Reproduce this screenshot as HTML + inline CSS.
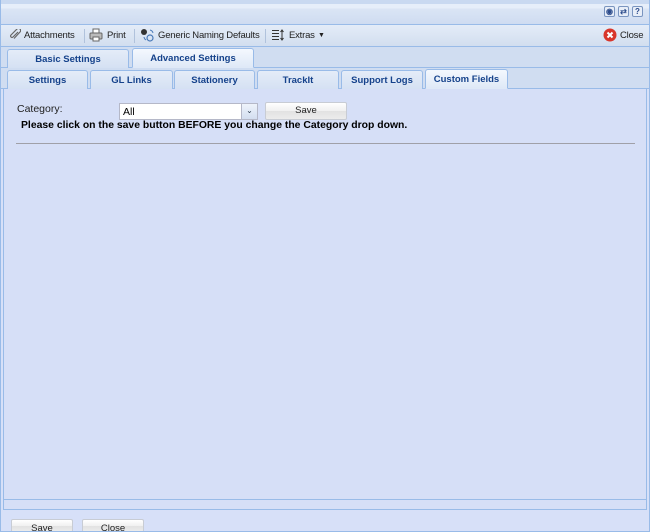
<!DOCTYPE html>
<html><head><meta charset="utf-8"><style>
*{box-sizing:border-box;margin:0;padding:0}
html,body{width:650px;height:532px;overflow:hidden}
body{background:#d7e0f8;font-family:"Liberation Sans",sans-serif;font-size:11px;position:relative;color:#000}
.abs{position:absolute}
#frame{left:0;top:0;width:650px;height:532px;border:1px solid #99bbe8;border-top:none}
#hdr{left:0;top:0;width:650px;height:25px;background:linear-gradient(#e6eefa 0,#e6eefa 4px,#dae5f5 5px,#cfdcf1);border:1px solid #99bbe8;border-top:4px solid #c9d9f1}
#tb{left:0;top:25px;width:650px;height:22px;background:linear-gradient(#e4ecf8,#d2deef);border:1px solid #99bbe8;border-top:none}
.ti{position:absolute;top:5px;font-size:9.5px;color:#222;letter-spacing:-0.2px}
.sep{position:absolute;top:4px;width:1px;height:14px;background:#b0c2dc}
#t1{left:0;top:47px;width:650px;height:21px;background:#d0ddf1;border-left:1px solid #99bbe8;border-right:1px solid #99bbe8;border-bottom:1px solid #99bbe8}
#t2{left:0;top:68px;width:650px;height:21px;background:#d0ddf1;border-left:1px solid #99bbe8;border-right:1px solid #99bbe8;border-bottom:1px solid #99bbe8}
.tab{position:absolute;bottom:-1px;height:19px;border:1px solid #99bbe8;border-bottom:none;border-radius:3px 3px 0 0;background:linear-gradient(#e4ecf8,#d5e1f3);font-weight:bold;font-size:9.5px;color:#15428b;text-align:center;line-height:19px}
.act{background:linear-gradient(#f4f8fe,#dfe9f7);height:20px;border-bottom:1px solid #dfe9f7}
#content{left:3px;top:89px;width:644px;height:411px;background:#d6dff7;border-left:1px solid #99bbe8;border-right:1px solid #99bbe8;border-bottom:1px solid #99bbe8}
.btn{position:absolute;height:22px;border:1px solid #c8ccd4;border-radius:2px;background:linear-gradient(#ffffff,#f0f0f0 50%,#e2e2e2 51%,#ececec);font-size:9.5px;text-align:center;line-height:18px;color:#222}
.ic{position:absolute;top:2px;width:11px;height:11px;border:1px solid #7a95c0;border-radius:2px;background:#e8eef8;font-size:8px;line-height:9px;text-align:center;color:#2c4c8c;font-weight:bold}
</style></head><body>
<div class="abs" id="hdr">
 <div class="ic" style="left:603px;top:2px">◉</div>
 <div class="ic" style="left:617px;top:2px">⇄</div>
 <div class="ic" style="left:631px;top:2px">?</div>
</div>
<div class="abs" id="tb">
 <svg class="abs" style="left:8px;top:4px" width="12" height="12" viewBox="0 0 12 12"><path d="M9 3L4 8a1.3 1.3 0 0 1-2-2l6-6a2 2 0 0 1 3 3L5 9.5" fill="none" stroke="#666" stroke-width="1.2"/></svg>
 <span class="ti" style="left:23px">Attachments</span>
 <div class="sep" style="left:83px"></div>
 <svg class="abs" style="left:88px;top:3px" width="14" height="14" viewBox="0 0 14 14"><rect x="4" y="1" width="6" height="4" fill="#fff" stroke="#666"/><rect x="1" y="5" width="12" height="6" rx="1" fill="#bbb" stroke="#666"/><rect x="4" y="9" width="6" height="4" fill="#fff" stroke="#666"/></svg>
 <span class="ti" style="left:106px">Print</span>
 <div class="sep" style="left:133px"></div>
 <svg class="abs" style="left:139px;top:3px" width="15" height="14" viewBox="0 0 15 14"><circle cx="4" cy="4" r="3" fill="#333"/><circle cx="10" cy="10" r="3" fill="none" stroke="#4a7ab8" stroke-width="1.2"/><path d="M10 2a4 4 0 0 1 3 3M4 9a4 4 0 0 0 2 3" stroke="#4a7ab8" fill="none"/></svg>
 <span class="ti" style="left:157px">Generic Naming Defaults</span>
 <div class="sep" style="left:264px"></div>
 <svg class="abs" style="left:271px;top:4px" width="13" height="13" viewBox="0 0 13 13"><path d="M0 1.5h7M0 4.5h7M0 7.5h7M0 10.5h7M10 1v10M8.5 3l1.5-2 1.5 2M8.5 9l1.5 2 1.5-2" stroke="#333" fill="none"/></svg>
 <span class="ti" style="left:288px">Extras</span>
 <span class="ti" style="left:317px;font-size:7px;top:7px">▼</span>
 <svg class="abs" style="left:602px;top:3px" width="14" height="14" viewBox="0 0 14 14"><circle cx="7" cy="7" r="6.5" fill="#d8362b"/><path d="M4.5 4.5l5 5M9.5 4.5l-5 5" stroke="#fff" stroke-width="2"/></svg>
 <span class="ti" style="left:619px">Close</span>
</div>
<div class="abs" id="t1">
 <div class="tab" style="left:6px;width:122px">Basic Settings</div>
 <div class="tab act" style="left:131px;width:122px">Advanced Settings</div>
</div>
<div class="abs" id="t2">
 <div class="tab" style="left:6px;width:81px">Settings</div>
 <div class="tab" style="left:89px;width:83px">GL Links</div>
 <div class="tab" style="left:173px;width:81px">Stationery</div>
 <div class="tab" style="left:256px;width:82px">TrackIt</div>
 <div class="tab" style="left:340px;width:82px">Support Logs</div>
 <div class="tab act" style="left:424px;width:83px">Custom Fields</div>
</div>
<div class="abs" id="content">
 <span class="abs" style="left:13px;top:14px;font-size:10.5px;color:#222">Category:</span>
 <div class="abs" style="left:115px;top:14px;width:139px;height:17px;background:#fff;border:1px solid #b5b8c8;font-size:10.5px;padding:2px 3px">All</div>
 <div class="abs" style="left:237px;top:14px;width:17px;height:17px;background:linear-gradient(#eef3fb,#d3def0);border:1px solid #b5b8c8;font-size:8px;text-align:center;line-height:14px;color:#345">&#8964;</div>
 <div class="btn" style="left:261px;top:13px;width:82px;height:18px;line-height:16px">Save</div>
 <div class="abs" style="left:17px;top:31px;font-weight:bold;font-size:10.4px;white-space:nowrap">Please click on the save button BEFORE you change the Category drop down.</div>
 <div class="abs" style="left:12px;top:54px;width:619px;height:1px;background:#a0a0a8"></div>
</div>
<div class="abs" style="left:3px;top:500px;width:644px;height:10px;border-left:1px solid #99bbe8;border-right:1px solid #99bbe8;border-bottom:1px solid #99bbe8;background:#d6dff7"></div>
<div class="btn" style="left:11px;top:519px;width:62px;height:13px;border-bottom:none;line-height:18px">Save</div>
<div class="btn" style="left:82px;top:519px;width:62px;height:13px;border-bottom:none;line-height:18px">Close</div>
<div class="abs" id="frame"></div>
</body></html>
